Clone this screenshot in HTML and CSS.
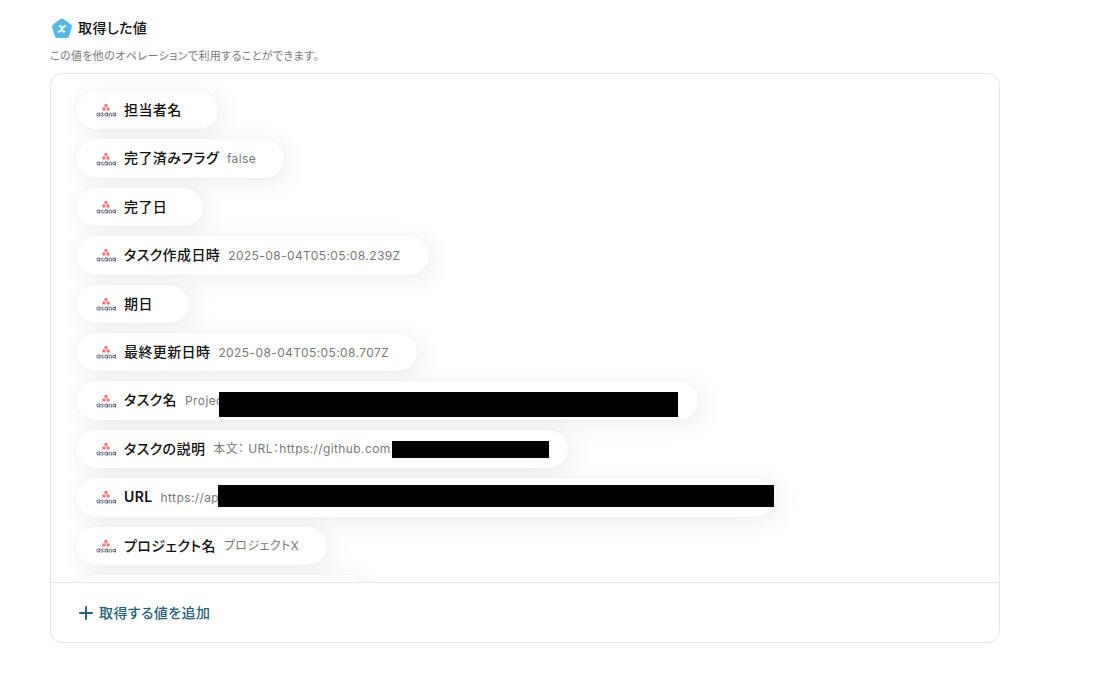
FILE: index.html
```html
<!DOCTYPE html>
<html lang="ja">
<head>
<meta charset="utf-8">
<meta name="viewport" content="width=device-width, initial-scale=1">
<title>取得した値</title>
<link rel="stylesheet" href="styles.css">
</head>
<body>
<svg class="defs" aria-hidden="true">
  <symbol id="asana" viewBox="0 0 20 14">
    <g fill="#f0717a"><circle cx="10" cy="2.500" r="1.700"/><circle cx="7.900" cy="6" r="1.700"/><circle cx="12.100" cy="6" r="1.700"/></g>
    <circle cx="10" cy="4.600" r="1" fill="#f9b59a"/>
    <g fill="none" stroke="#5f6375" stroke-width="1">
      <circle cx="2.200" cy="11.500" r="1.450"/><path d="M3.800 9.600v3.900"/>
      <path d="M7.300 10.400C6.700 9.800 5.300 9.900 5.400 10.700C5.500 11.600 7.400 11.200 7.400 12.300C7.400 13.200 5.800 13.300 5.100 12.600"/>
      <circle cx="10.100" cy="11.500" r="1.450"/><path d="M11.700 9.600v3.900"/>
      <path d="M13.300 13.500v-2.100c0-1.800 2.300-1.800 2.300 0v2.100"/>
      <circle cx="18" cy="11.500" r="1.350"/><path d="M19.400 9.600v3.900"/>
    </g>
  </symbol>
</svg>
<main class="page">
  <header class="heading">
    <svg class="badge" viewBox="0 0 24 24" aria-hidden="true">
      <path d="M12 5L19.500 10.500L16.800 19.500H7.200L4.500 10.500Z" fill="#56b8e6" stroke="#56b8e6" stroke-width="5" stroke-linejoin="round"/>
      <path d="M9.300 10.200c1.300-.4 1.700.1 2.100 1.100l1.200 3.400c.3 1 .9 1.300 2 .9M15.500 10.200c-.9-.2-1.300.1-1.900.8l-3.300 4.100c-.5.600-.9.800-1.700.6" fill="none" stroke="#fff" stroke-width="1.600" stroke-linecap="round" stroke-linejoin="round"/>
    </svg>
    <h1 class="title">取得した値</h1>
  </header>
  <p class="note">この値を他のオペレーションで利用することができます。</p>
  <section class="card">
    <ul class="list">
      <li class="pill"><svg class="logo"><use href="#asana"/></svg><span class="name">担当者名</span><span class="value"></span></li>
      <li class="pill"><svg class="logo"><use href="#asana"/></svg><span class="name">完了済みフラグ</span><span class="value">false</span></li>
      <li class="pill"><svg class="logo"><use href="#asana"/></svg><span class="name">完了日</span><span class="value"></span></li>
      <li class="pill"><svg class="logo"><use href="#asana"/></svg><span class="name">タスク作成日時</span><span class="value">2025-08-04T05:05:08.239Z</span></li>
      <li class="pill"><svg class="logo"><use href="#asana"/></svg><span class="name">期日</span><span class="value"></span></li>
      <li class="pill"><svg class="logo"><use href="#asana"/></svg><span class="name">最終更新日時</span><span class="value">2025-08-04T05:05:08.707Z</span></li>
      <li class="pill pill-task"><svg class="logo"><use href="#asana"/></svg><span class="name">タスク名</span><span class="value">Projec</span><span class="mask mask-task"></span></li>
      <li class="pill pill-description"><svg class="logo"><use href="#asana"/></svg><span class="name">タスクの説明</span><span class="value">本文： URL：https://github.com</span><span class="mask mask-description"></span></li>
      <li class="pill pill-url"><svg class="logo"><use href="#asana"/></svg><span class="name name-latin">URL</span><span class="value">https://ap</span><span class="mask mask-url"></span></li>
      <li class="pill"><svg class="logo"><use href="#asana"/></svg><span class="name">プロジェクト名</span><span class="value">プロジェクトX</span></li>
      <li class="pill pill-next"></li>
    </ul>
    <footer class="footer">
      <button class="add" type="button">
        <svg class="plus" viewBox="0 0 14 14" aria-hidden="true"><path d="M7 1v12M1 7h12" stroke="#24617c" stroke-width="2" stroke-linecap="round"/></svg>
        取得する値を追加
      </button>
    </footer>
  </section>
</main>
</body>
</html>
```

FILE: styles.css
```css
* { box-sizing: border-box; }
body {
  margin: 0;
  background: #fff;
  color: #111;
  font-family: Inter, "Noto Sans CJK JP", sans-serif;
  font-feature-settings: "palt";
  letter-spacing: 0.025em;
  line-height: 1.6;
}
.defs { position: absolute; width: 0; height: 0; }
.page { padding: 16px 114px 40px 50px; }
.heading { display: flex; align-items: center; gap: 4px; height: 24px; }
.badge { width: 24px; height: 24px; }
.title { margin: 0; font-size: 14px; font-weight: 500; }
.note { margin: 7px 0 8px; font-size: 11px; line-height: 18px; color: #777; }
.card { border: 1px solid #e3e3e3; border-radius: 12px; overflow: hidden; }
.list {
  display: flex;
  flex-direction: column;
  align-items: flex-start;
  gap: 10px;
  height: 508px;
  margin: 0;
  padding: 17px 25px 0;
  list-style: none;
  overflow: hidden;
}
.pill {
  position: relative;
  display: flex;
  flex-shrink: 0;
  align-items: center;
  gap: 8px;
  max-width: 100%;
  padding: 8px 28px 8px 20px;
  border-radius: 20px;
  background: #fff;
  box-shadow: 0 0 2px rgba(0, 0, 0, 0.06), 4px 4px 24px rgba(0, 0, 0, 0.08);
  white-space: nowrap;
}
.logo { width: 20px; height: 14px; }
.name { font-size: 14px; font-weight: 500; }
.name-latin { font-weight: 600; }
.value { font-size: 12px; color: #777; }
.pill-task { width: 622px; }
.pill-description { width: 492px; }
.pill-url { width: 699px; }
.pill-next { width: 290px; height: 38px; }
.mask { position: absolute; background: #000; }
.mask-task { left: 143px; top: 11px; width: 459px; height: 25px; }
.mask-description { left: 316px; top: 11px; width: 157px; height: 17px; }
.mask-url { left: 142px; top: 7px; width: 556px; height: 22px; }
.footer { display: flex; padding: 19px 28px 18px; border-top: 1px solid #e3e3e3; }
.add {
  display: flex;
  align-items: center;
  gap: 6px;
  padding: 0;
  border: 0;
  background: none;
  color: #24617c;
  font: inherit;
  font-size: 14px;
  font-weight: 500;
  letter-spacing: inherit;
  cursor: pointer;
}
.plus { width: 14px; height: 14px; }
```
